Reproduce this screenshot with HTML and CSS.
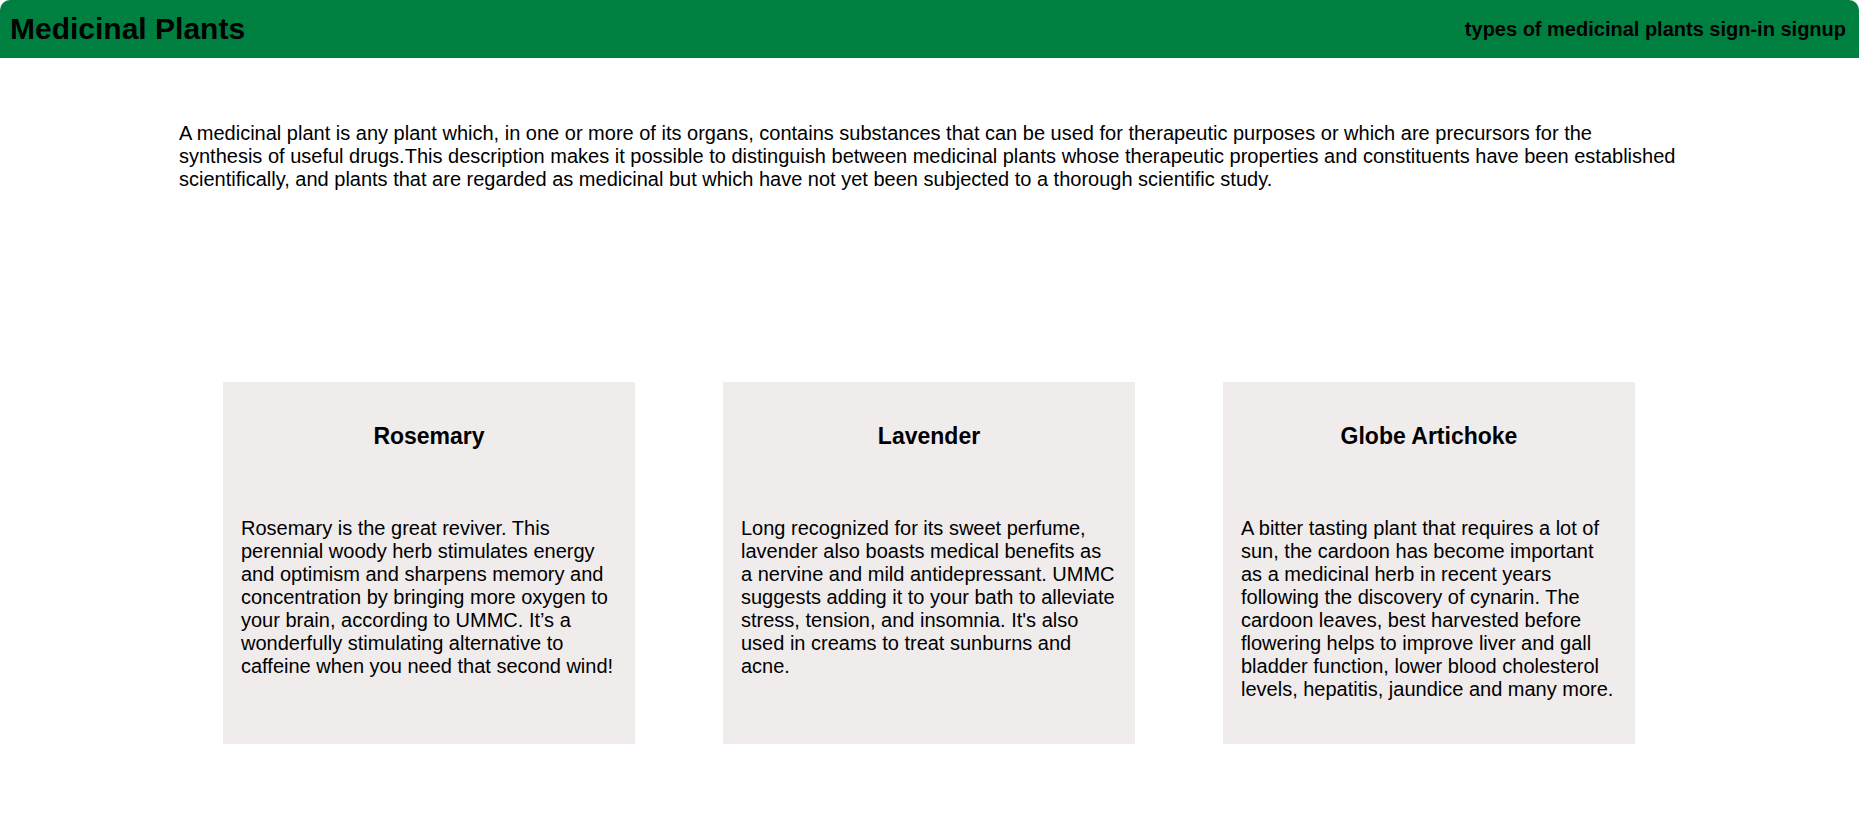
FILE: index.html
```html
<!DOCTYPE html>
<html lang="en">
<head>
<meta charset="utf-8">
<title>Medicinal Plants</title>
<link rel="stylesheet" href="styles.css">
</head>
<body>
<header class="topbar">
  <h1 class="brand">Medicinal Plants</h1>
  <nav class="nav">types of medicinal plants sign-in signup</nav>
</header>
<main class="content">
  <p class="intro">A medicinal plant is any plant which, in one or more of its organs, contains substances that can be used for therapeutic purposes or which are precursors for the synthesis of useful drugs.This description makes it possible to distinguish between medicinal plants whose therapeutic properties and constituents have been established scientifically, and plants that are regarded as medicinal but which have not yet been subjected to a thorough scientific study.</p>
  <section class="cards">
    <article class="card">
      <h2 class="card-title">Rosemary</h2>
      <p class="card-text">Rosemary is the great reviver. This perennial woody herb stimulates energy and optimism and sharpens memory and concentration by bringing more oxygen to your brain, according to UMMC. It’s a wonderfully stimulating alternative to caffeine when you need that second wind!</p>
    </article>
    <article class="card">
      <h2 class="card-title">Lavender</h2>
      <p class="card-text">Long recognized for its sweet perfume, lavender also boasts medical benefits as a nervine and mild antidepressant. UMMC suggests adding it to your bath to alleviate stress, tension, and insomnia. It's also used in creams to treat sunburns and acne.</p>
    </article>
    <article class="card">
      <h2 class="card-title">Globe Artichoke</h2>
      <p class="card-text">A bitter tasting plant that requires a lot of sun, the cardoon has become important as a medicinal herb in recent years following the discovery of cynarin. The cardoon leaves, best harvested before flowering helps to improve liver and gall bladder function, lower blood cholesterol levels, hepatitis, jaundice and many more.</p>
    </article>
  </section>
</main>
</body>
</html>
```

FILE: styles.css
```css
html, body {
  margin: 0;
  padding: 0;
  background: #ffffff;
}

body {
  font-family: "Liberation Sans", Arial, sans-serif;
  color: #000;
}

.topbar {
  height: 58px;
  box-sizing: border-box;
  background: #008040;
  border-radius: 10px 10px 0 0;
  display: flex;
  align-items: center;
  justify-content: space-between;
  padding: 0 13px 0 10px;
}

.brand {
  margin: 0;
  font-size: 30px;
  font-weight: bold;
  line-height: normal;
}

.nav {
  font-size: 20px;
  font-weight: bold;
}

.content {
  padding: 0 179px;
}

.intro {
  margin: 64px 0 0;
  font-size: 20px;
  line-height: 23px;
}

.cards {
  display: flex;
  justify-content: center;
  align-items: stretch;
  gap: 88px;
  margin-top: 191px;
  padding-right: 1px;
}

.card {
  width: 412px;
  box-sizing: border-box;
  background: #f0ecec;
  padding: 41px 18px 43px;
}

.card-title {
  margin: 0;
  text-align: center;
  font-size: 23px;
  font-weight: bold;
  line-height: normal;
}

.card-text {
  margin: 67px 0 0;
  font-size: 20px;
  line-height: 23px;
}
```
